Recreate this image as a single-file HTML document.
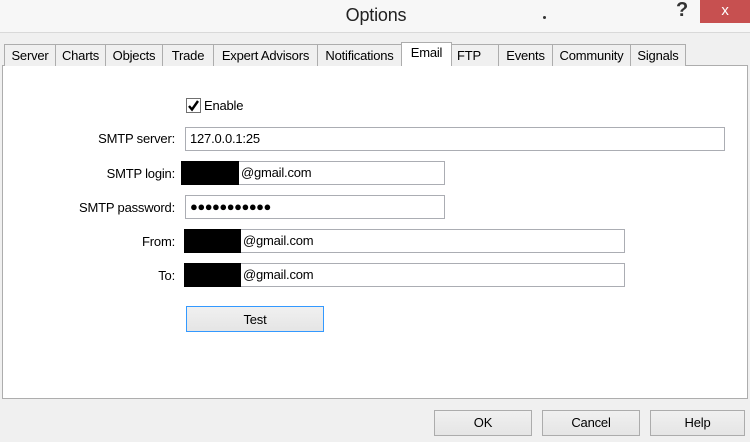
<!DOCTYPE html>
<html><head><style>
*{margin:0;padding:0;box-sizing:border-box}
body{width:750px;height:442px;background:#f0f0f0;font-family:"Liberation Sans",sans-serif;font-size:13px;color:#000;position:relative;overflow:hidden;letter-spacing:-0.2px}
.a{position:absolute}
.tab{position:absolute;top:44px;height:22px;border:1px solid #adadad;border-bottom:none;background:#f0f0f0;text-align:center;line-height:21px;font-size:13px}
.inp{position:absolute;background:#fff;border:1px solid #abadb3;height:24px;line-height:22px;padding-left:4px}
.blk{position:absolute;background:#000}
.lbl{position:absolute;text-align:right;width:175px;left:0;line-height:20px}
.btn{position:absolute;border:1px solid #acacac;background:linear-gradient(#f0f0f0,#e5e5e5);text-align:center;line-height:24px;height:26px}
</style></head><body>
<div class="a" style="left:0;top:0;width:750px;height:33px;background:#f7f7f7;border-bottom:1px solid #d9d9d9"></div>
<div class="a" style="left:0;top:5px;width:752px;text-align:center;font-size:18px;color:#222">Options</div>
<div class="a" style="left:543px;top:16px;width:3px;height:3px;background:#333;border-radius:2px"></div>
<div class="a" style="left:676px;top:-1px;font-size:20px;font-weight:bold;color:#333">?</div>
<div class="a" style="left:700px;top:0;width:50px;height:23px;background:#c75050;color:#fff;text-align:center;font-size:15px;line-height:21px">x</div>
<div class="a" style="left:2px;top:65px;width:746px;height:334px;background:#fff;border:1px solid #adadad"></div>
<div class="tab" style="left:4px;width:52px">Server</div>
<div class="tab" style="left:55px;width:51px">Charts</div>
<div class="tab" style="left:105px;width:58px">Objects</div>
<div class="tab" style="left:162px;width:52px">Trade</div>
<div class="tab" style="left:213px;width:105px">Expert Advisors</div>
<div class="tab" style="left:317px;width:85px">Notifications</div>
<div class="tab" style="left:451px;width:48px;text-align:left;padding-left:5px">FTP</div>
<div class="tab" style="left:498px;width:55px">Events</div>
<div class="tab" style="left:552px;width:79px">Community</div>
<div class="tab" style="left:630px;width:56px">Signals</div>
<div class="tab" style="left:401px;top:42px;width:51px;height:24px;background:#fff;line-height:20px">Email</div>
<div class="a" style="left:186px;top:98px;width:15px;height:15px;border:1px solid #707070;background:#fff"></div>
<svg class="a" style="left:187px;top:99px" width="13" height="13"><path d="M2 7 L5 10.5 L11 2" stroke="#000" stroke-width="2.4" fill="none"/></svg>
<div class="a" style="left:204px;top:98px">Enable</div>
<div class="lbl" style="top:129px">SMTP server:</div>
<div class="inp" style="left:185px;top:127px;width:540px">127.0.0.1:25</div>
<div class="lbl" style="top:164px">SMTP login:</div>
<div class="inp" style="left:181px;top:161px;width:264px;padding-left:59px">@gmail.com</div>
<div class="blk" style="left:181px;top:161px;width:58px;height:24px"></div>
<div class="lbl" style="top:198px">SMTP password:</div>
<div class="inp" style="left:185px;top:195px;width:260px;font-size:13px;letter-spacing:-0.5px;line-height:22px">●●●●●●●●●●●</div>
<div class="lbl" style="top:232px">From:</div>
<div class="inp" style="left:184px;top:229px;width:441px;padding-left:58px">@gmail.com</div>
<div class="blk" style="left:184px;top:229px;width:57px;height:24px"></div>
<div class="lbl" style="top:266px">To:</div>
<div class="inp" style="left:184px;top:263px;width:441px;padding-left:58px">@gmail.com</div>
<div class="blk" style="left:184px;top:263px;width:57px;height:24px"></div>
<div class="btn" style="left:186px;top:306px;width:138px;border-color:#3399ff;line-height:25px">Test</div>
<div class="btn" style="left:434px;top:410px;width:98px">OK</div>
<div class="btn" style="left:542px;top:410px;width:98px">Cancel</div>
<div class="btn" style="left:650px;top:410px;width:95px">Help</div>
</body></html>
